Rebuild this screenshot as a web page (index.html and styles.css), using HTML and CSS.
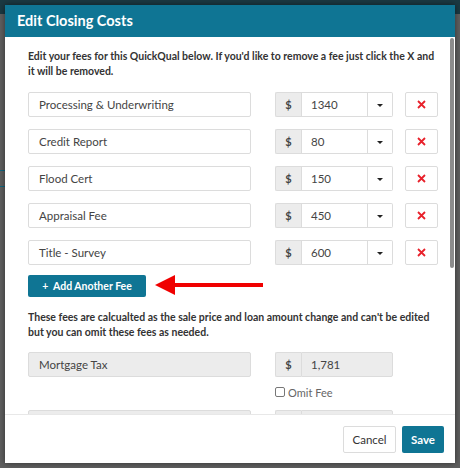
FILE: index.html
```html
<!DOCTYPE html>
<html lang="en">
<head>
  <meta charset="UTF-8" />
  <title>Edit Closing Costs</title>
  <link rel="stylesheet" href="styles.css">
</head>
<body>
  <div class="page">
    <div class="page-top"></div>
    <div class="page-line one"></div>
    <div class="page-line two"></div>
  </div>

  <div class="modal">
    <div class="modal-header">Edit Closing Costs</div>
    <div class="modal-body">
      <p class="note">Edit your fees for this QuickQual below. If you'd like to remove a fee just click the X and it will be removed.</p>
      <div class="fee-list" id="feeList"></div>
      <button class="btn btn-add">+&nbsp; Add Another Fee</button>
      <p class="note second">These fees are calcualted as the sale price and loan amount change and can't be edited but you can omit these fees as needed.</p>
      <div class="fixed-list">
        <div class="fixed-row">
          <div class="field name readonly">Mortgage Tax</div>
          <div class="amount-col">
            <div class="amount-group readonly">
              <span class="addon">$</span>
              <span class="field amount wide">1,781</span>
            </div>
            <label class="omit"><span class="check"></span>Omit Fee</label>
          </div>
        </div>
        <!-- next fee is scrolled below the fold -->
        <div class="fixed-row">
          <div class="field name readonly"></div>
          <div class="amount-col">
            <div class="amount-group readonly">
              <span class="addon"></span>
              <span class="field amount wide"></span>
            </div>
          </div>
        </div>
      </div>
      <div class="scroll-thumb"></div>
    </div>
    <div class="modal-footer">
      <button class="btn btn-cancel">Cancel</button>
      <button class="btn btn-save">Save</button>
    </div>
  </div>

  <svg class="arrow" width="112" height="22" viewBox="0 0 112 22">
    <polygon points="0,11 20,1 20,21" fill="#f00000" />
    <rect x="18" y="9" width="90" height="4" fill="#f00000" />
  </svg>

  <script>
    const fees = [
      { name: 'Processing & Underwriting', amount: 1340 },
      { name: 'Credit Report', amount: 80 },
      { name: 'Flood Cert', amount: 150 },
      { name: 'Appraisal Fee', amount: 450 },
      { name: 'Title - Survey', amount: 600 },
    ];

    function renderFees() {
      const list = document.getElementById('feeList');
      list.innerHTML = '';
      fees.forEach(f => {
        const row = document.createElement('div');
        row.className = 'fee-row';
        row.innerHTML = `
          <div class="field name">${f.name}</div>
          <div class="amount-group">
            <span class="addon">$</span>
            <span class="field amount">${f.amount}</span>
            <span class="caret-box"><span class="caret"></span></span>
          </div>
          <button class="remove" title="Remove">
            <svg width="9" height="9" viewBox="0 0 9 9">
              <path d="M1 1 L8 8 M8 1 L1 8" stroke="#e8212b" stroke-width="1.8" />
            </svg>
          </button>
        `;
        list.appendChild(row);
      });
    }

    renderFees();
  </script>
</body>
</html>
```

FILE: styles.css
```css
body {
  margin: 0;
  width: 460px;
  height: 468px;
  overflow: hidden;
  background: #5f5f5f;
  font-family: Lato, 'Open Sans', sans-serif;
  color: #333;
  position: relative;
}
.page-top {
  height: 14px;
  background: #1b3942;
}
.page-line {
  position: absolute;
  left: 0;
  width: 10px;
  height: 1px;
  background: #0f6680;
}
.page-line.one { top: 170px; }
.page-line.two { top: 186px; }
.modal {
  position: absolute;
  top: 5px;
  left: 5px;
  width: 450px;
  height: 458px;
  background: #fff;
  display: flex;
  flex-direction: column;
  box-shadow: 0 0 6px rgba(0,0,0,0.5);
}
.modal-header {
  height: 32px;
  background: #0f7594;
  color: #fff;
  font-weight: bold;
  font-size: 14.5px;
  line-height: 32px;
  padding-left: 12px;
  flex-shrink: 0;
}
.modal-body {
  flex: 1;
  overflow: hidden;
  padding: 12px 0 0 23px;
  position: relative;
}
.note {
  margin: 0 0 14px 0;
  font-size: 10.5px;
  font-weight: bold;
  line-height: 14.5px;
  color: #333;
  width: 411px;
}
.note.second {
  margin: 13px 0 13px 0;
}
.fee-list {
  display: flex;
  flex-direction: column;
  gap: 12px;
}
.fee-row, .fixed-row {
  display: flex;
  align-items: flex-start;
}
.field {
  box-sizing: border-box;
  height: 25px;
  border: 1px solid #dcdcdc;
  border-radius: 2px;
  font-size: 11.5px;
  line-height: 23px;
  color: #444;
  background: #fff;
}
.field.name {
  width: 223px;
  padding-left: 10px;
  margin-right: 24px;
}
.field.readonly {
  background: #ececec;
}
.amount-group {
  display: flex;
  height: 25px;
}
.addon {
  box-sizing: border-box;
  width: 26px;
  height: 25px;
  border: 1px solid #dcdcdc;
  border-right: none;
  border-radius: 2px 0 0 2px;
  background: #ececec;
  font-size: 11px;
  font-weight: bold;
  line-height: 23px;
  text-align: center;
  color: #444;
}
.field.amount {
  width: 67px;
  padding-left: 9px;
  border-radius: 0;
}
.field.amount.wide {
  width: 92px;
  border-radius: 0 2px 2px 0;
}
.amount-group.readonly .field.amount {
  background: #ececec;
}
.caret-box {
  box-sizing: border-box;
  width: 25px;
  height: 25px;
  border: 1px solid #dcdcdc;
  border-left: none;
  border-radius: 0 2px 2px 0;
  display: flex;
  align-items: center;
  justify-content: center;
  padding-top: 2px;
}
.caret {
  width: 0;
  height: 0;
  border-left: 3px solid transparent;
  border-right: 3px solid transparent;
  border-top: 3px solid #222;
}
.remove {
  box-sizing: border-box;
  width: 33px;
  height: 25px;
  margin-left: 12px;
  border: 1px solid #dcdcdc;
  border-radius: 2px;
  background: #fff;
  padding: 0;
  display: flex;
  align-items: center;
  justify-content: center;
}
.btn {
  font-family: Lato, 'Open Sans', sans-serif;
  border-radius: 2px;
  cursor: pointer;
  padding: 0;
}
.btn-add {
  display: block;
  margin-top: 10px;
  width: 118px;
  height: 22px;
  background: #0f7594;
  border: none;
  color: #fff;
  font-size: 10.5px;
  font-weight: bold;
}
.fixed-list {
  display: flex;
  flex-direction: column;
  gap: 13px;
}
.amount-col {
  display: flex;
  flex-direction: column;
}
.omit {
  display: flex;
  align-items: center;
  margin-top: 10px;
  font-size: 11px;
  color: #666;
  height: 10px;
}
.check {
  box-sizing: border-box;
  width: 10px;
  height: 10px;
  border: 1px solid #777;
  border-radius: 2px;
  margin-right: 3px;
  background: #fff;
}
.scroll-thumb {
  position: absolute;
  right: 1px;
  top: 1px;
  width: 4px;
  height: 230px;
  border-radius: 2px;
  background: #8c8c8c;
}
.modal-footer {
  height: 48px;
  flex-shrink: 0;
  border-top: 1px solid #e8e8e8;
  display: flex;
  justify-content: flex-end;
  align-items: center;
  gap: 6px;
  padding-right: 11px;
}
.btn-cancel {
  width: 53px;
  height: 27px;
  background: #fff;
  border: 1px solid #dcdcdc;
  color: #333;
  font-size: 11.5px;
}
.btn-save {
  width: 42px;
  height: 27px;
  background: #0f7594;
  border: none;
  color: #fff;
  font-weight: bold;
  font-size: 11.5px;
}
.arrow {
  position: absolute;
  left: 155px;
  top: 274px;
}
```
